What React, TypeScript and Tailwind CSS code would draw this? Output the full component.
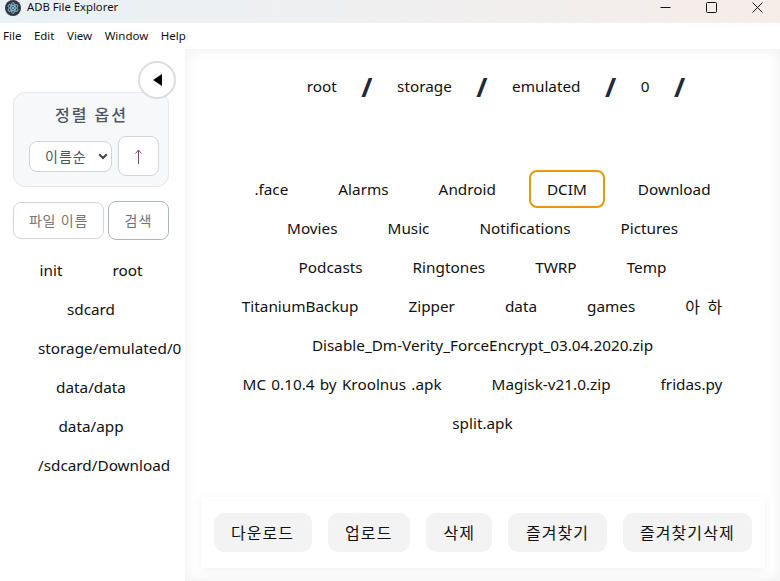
const font = { fontFamily: '"Noto Sans", "Noto Sans CJK KR", sans-serif' };

const crumbs = ['root', 'storage', 'emulated', '0'];
const sideItems = ['init', 'root', 'sdcard', 'storage/emulated/0', 'data/data', 'data/app', '/sdcard/Download'];
const files = [
    '.face', 'Alarms', 'Android', 'DCIM', 'Download', 'Movies', 'Music', 'Notifications', 'Pictures',
    'Podcasts', 'Ringtones', 'TWRP', 'Temp', 'TitaniumBackup', 'Zipper', 'data', 'games', '아 하',
    'Disable_Dm-Verity_ForceEncrypt_03.04.2020.zip', 'MC 0.10.4 by Kroolnus .apk', 'Magisk-v21.0.zip', 'fridas.py', 'split.apk',
];
const actions = ['다운로드', '업로드', '삭제', '즐겨찾기', '즐겨찾기삭제'];

function ElectronLogo() {
    return (
        <svg width="16" height="16" viewBox="0 0 16 16" className="shrink-0">
            <circle cx="8" cy="8" r="8" fill="#2f3542" />
            <g fill="none" stroke="#9feaf9" strokeWidth="0.7">
                <ellipse cx="8" cy="8" rx="5.5" ry="2.2" transform="rotate(30 8 8)" />
                <ellipse cx="8" cy="8" rx="5.5" ry="2.2" transform="rotate(90 8 8)" />
                <ellipse cx="8" cy="8" rx="5.5" ry="2.2" transform="rotate(150 8 8)" />
            </g>
            <circle cx="8" cy="8" r="1" fill="#9feaf9" />
        </svg>
    );
}

function TitleBar() {
    return (
        <div className="h-[23px] shrink-0 flex items-center justify-between bg-gradient-to-r from-[#e9f1f6] to-[#f6ede9]">
            <div className="flex items-center gap-[6px] pl-[5px] pb-[8px]">
                <ElectronLogo />
                <span className="text-[11.3px] text-[#111]">ADB File Explorer</span>
            </div>
            <div className="flex items-center gap-[35px] pr-[17px] pb-[9px]">
                <svg width="11" height="11" viewBox="0 0 11 11"><path d="M0.5 5.5h10" stroke="#111" /></svg>
                <svg width="11" height="11" viewBox="0 0 11 11"><rect x="0.5" y="0.5" width="10" height="10" rx="1" fill="none" stroke="#111" /></svg>
                <svg width="11" height="11" viewBox="0 0 11 11"><path d="M0.5 0.5l10 10M10.5 0.5l-10 10" stroke="#111" /></svg>
            </div>
        </div>
    );
}

function MenuBar() {
    return (
        <div className="h-[26px] shrink-0 flex items-center gap-[12.5px] pl-[3px] text-[11.5px] text-[#111] bg-white">
            {['File', 'Edit', 'View', 'Window', 'Help'].map((m) => (
                <span key={m}>{m}</span>
            ))}
        </div>
    );
}

function Sidebar() {
    return (
        <aside className="w-[185px] shrink-0 bg-white relative pt-[43px]">
            <button className="absolute z-10 left-[138px] top-[12px] w-[38px] h-[38px] rounded-full bg-white border-2 border-[#dddddd] flex items-center justify-center">
                <svg width="9" height="12" viewBox="0 0 9 12"><path d="M0 6L9 0v12z" fill="#000" /></svg>
            </button>

            <div className="ml-[13px] w-[156px] h-[95px] rounded-xl border border-[#e5e7eb] bg-[#f7f8fa] flex flex-col pt-[12px] pl-[15px]">
                <div className="w-[125px] text-center text-[16px] font-medium text-[#4b5563] tracking-[2px] leading-[20px]">정렬 옵션</div>
                <div className="flex items-center gap-[6px] mt-[11px]">
                    <div className="w-[83px] h-[31px] rounded-lg border border-[#d1d5db] bg-white flex items-center justify-between pl-[15px] pr-[3px] text-[14px] tracking-[1px] text-[#4b5563]">
                        이름순
                        <svg width="10" height="7" viewBox="0 0 10 7"><path d="M1.2 1.2L5 5l3.8-3.8" fill="none" stroke="#444" strokeWidth="2" /></svg>
                    </div>
                    <button className="w-[41px] h-[40px] rounded-lg border border-[#d1d5db] bg-white flex items-center justify-center">
                        <svg width="9" height="15" viewBox="0 0 9 15"><path d="M4.5 1v14M1.5 4.5L4.5 1l3 3.5" fill="none" stroke="#7c4a68" strokeWidth="1" /></svg>
                    </button>
                </div>
            </div>

            <div className="ml-[13px] mt-[14px] flex items-center gap-[4px]">
                <div className="w-[91px] h-[37px] rounded-lg border border-[#d1d5db] flex items-center justify-center text-[14px] tracking-[0.8px] text-[#757575]">파일 이름</div>
                <button className="w-[61px] h-[39px] rounded-lg border border-[#adb5bd] flex items-center justify-center text-[14px] tracking-[1px] text-[#6b7280]">검색</button>
            </div>

            <div className="ml-[21px] w-[140px] mt-[11px] flex flex-wrap justify-center-safe gap-x-4 gap-y-px">
                {sideItems.map((s) => (
                    <div key={s} className="shrink-0 h-[38px] px-[17px] pt-[1px] flex items-center text-[15.3px] text-[#111] whitespace-nowrap">{s}</div>
                ))}
            </div>
        </aside>
    );
}

function Main() {
    return (
        <main className="flex-1 min-w-0 bg-white shadow-[inset_0_0_14px_rgba(0,0,0,0.07)] flex flex-col items-center">
            <div className="h-[75px] pl-[27px] flex items-center gap-[24.5px] text-[15.3px] text-[#111]">
                {crumbs.map((c) => (
                    <div key={c} className="flex items-center gap-[24.5px]">
                        <span>{c}</span>
                        <span className="text-[27px] font-bold text-[#1f2937] leading-none">/</span>
                    </div>
                ))}
            </div>
            <div className="w-[530px] mt-[46px] flex flex-wrap justify-center gap-x-4 gap-y-px text-[15.3px] text-[#111] [word-spacing:1.25px]">
                {files.map((f) => (
                    <div
                        key={f}
                        className={f === 'DCIM'
                            ? 'h-[38px] px-4 pt-[1px] flex items-center rounded-lg border-2 border-[#e59a0c] whitespace-nowrap'
                            : f === '아 하'
                                ? 'h-[38px] px-[17px] pt-[1px] flex items-center whitespace-nowrap text-[16px] tracking-[1px]'
                                : 'h-[38px] px-[17px] pt-[1px] flex items-center whitespace-nowrap'}
                    >
                        {f}
                    </div>
                ))}
            </div>
            <div className="mt-auto mb-[13px] w-[564px] h-[71px] bg-white shadow-[0_2px_10px_rgba(0,0,0,0.06)] flex items-center gap-4 pl-[13px]">
                {actions.map((a) => (
                    <button key={a} className="h-[39px] px-[17.5px] rounded-[10px] bg-[#f3f3f3] text-[16px] tracking-[1.05px] text-[#111] whitespace-nowrap">{a}</button>
                ))}
            </div>
        </main>
    );
}

export default function App() {
    return (
        <div className="w-[780px] h-[581px] overflow-hidden flex flex-col bg-white" style={font}>
            <TitleBar />
            <MenuBar />
            <div className="flex-1 min-h-0 flex">
                <Sidebar />
                <Main />
            </div>
        </div>
    );
}
